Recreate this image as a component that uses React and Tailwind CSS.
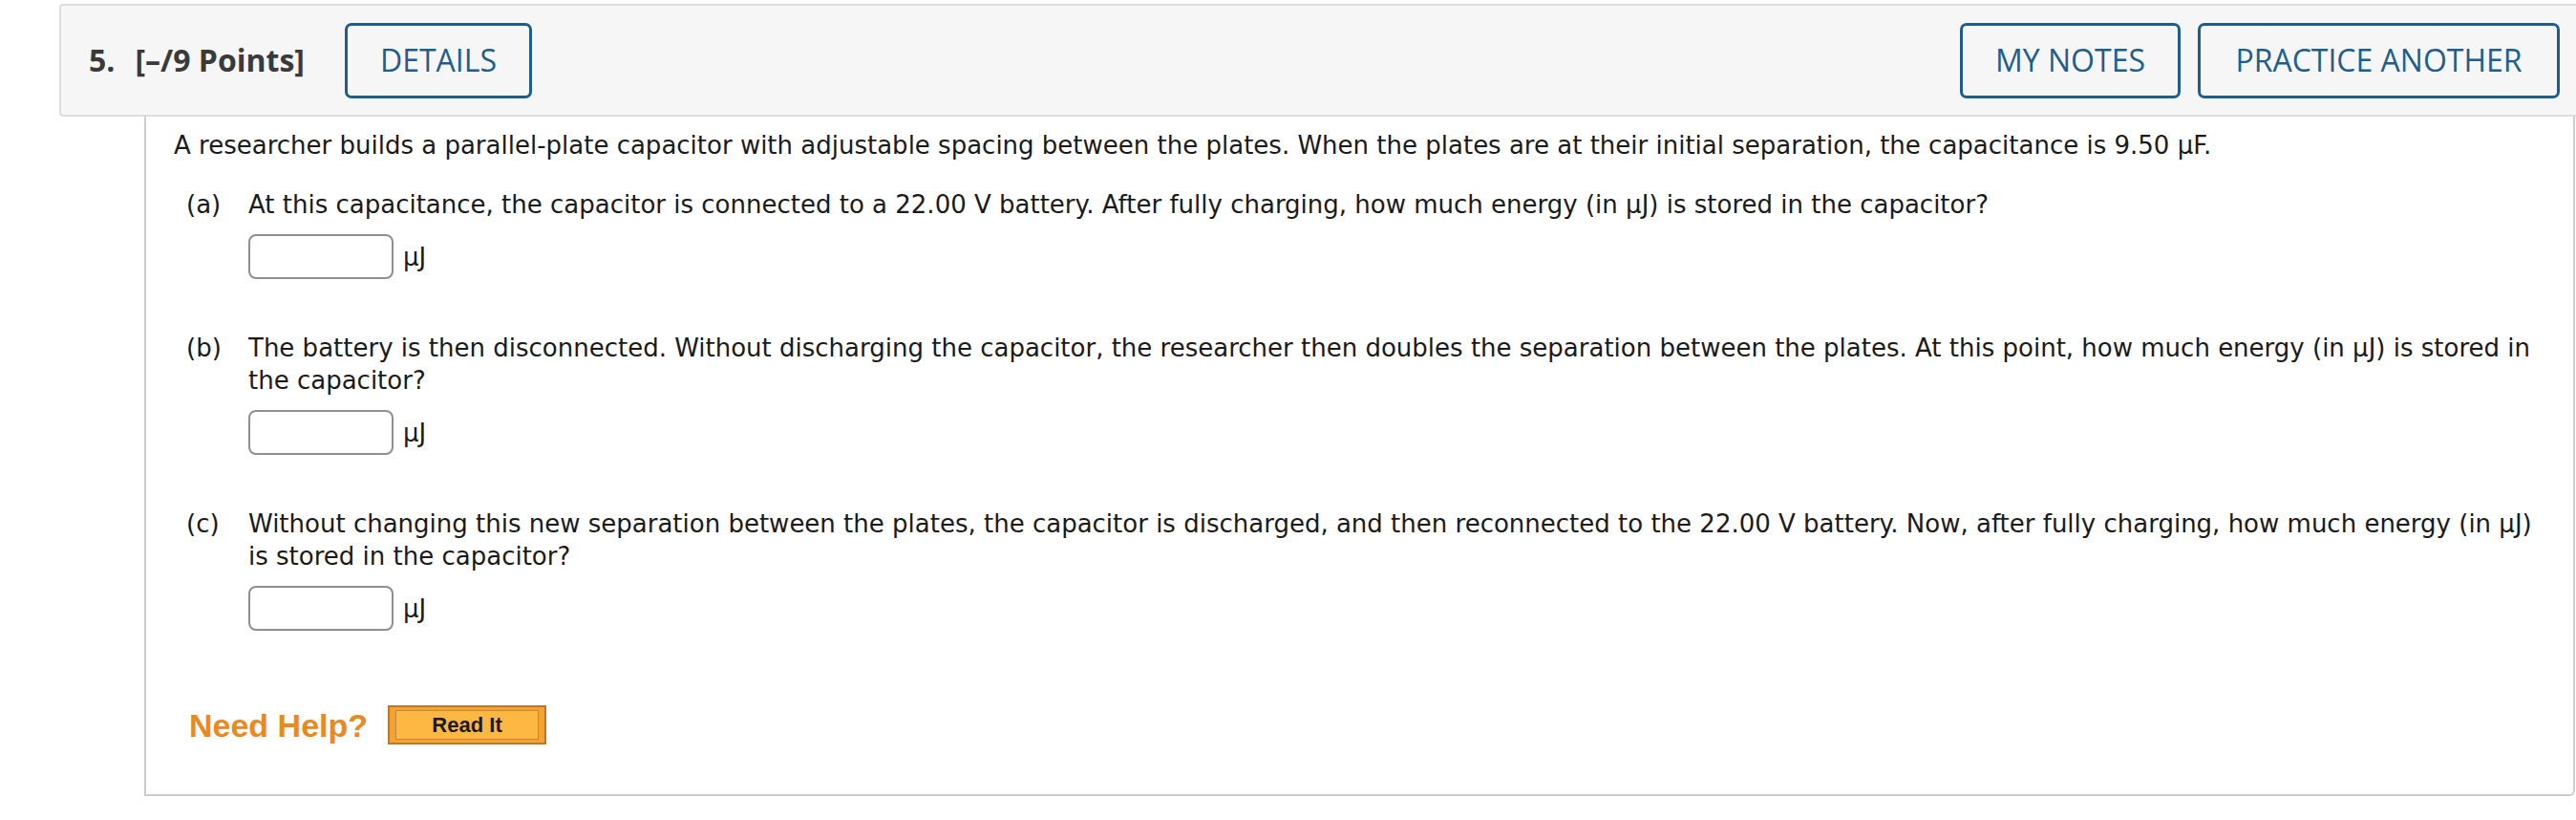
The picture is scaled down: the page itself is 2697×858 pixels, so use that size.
import React from 'react';

const parts = [
  {
    label: '(a)',
    text: 'At this capacitance, the capacitor is connected to a 22.00 V battery. After fully charging, how much energy (in μJ) is stored in the capacitor?',
  },
  {
    label: '(b)',
    text: 'The battery is then disconnected. Without discharging the capacitor, the researcher then doubles the separation between the plates. At this point, how much energy (in μJ) is stored in the capacitor?',
  },
  {
    label: '(c)',
    text: 'Without changing this new separation between the plates, the capacitor is discharged, and then reconnected to the 22.00 V battery. Now, after fully charging, how much energy (in μJ) is stored in the capacitor?',
  },
];

function HeaderButton({ children, width }) {
  return (
    <button
      className={`h-[79px] ${width} rounded-[7px] border-[3px] border-[#1f5e8c] text-[#1f5e8c] text-[32px] font-['Open_Sans',sans-serif] flex items-center justify-center`}
    >
      {children}
    </button>
  );
}

function Part({ label, text, first }) {
  return (
    <div className={`grid grid-cols-[65px_1fr] ${first ? 'mt-[28px]' : 'mt-[55px]'}`}>
      <div>{label}</div>
      <div>
        <p>{text}</p>
        <div className="mt-[14px] flex items-center">
          <input
            type="text"
            className="w-[152px] h-[47px] rounded-[8px] border-2 border-[#8f8f8f] bg-white outline-none"
          />
          <span className="ml-[10px]">μJ</span>
        </div>
      </div>
    </div>
  );
}

export default function App() {
  return (
    <div className="min-h-screen bg-white pt-[4px] pl-[62px]">
      <div className="h-[118px] flex items-center rounded-l-[4px] border-2 border-r-0 border-[#dddddd] bg-[#f6f6f7] pl-[29px] pr-[17px] font-['Open_Sans',sans-serif]">
        <span className="text-[32px] font-bold text-[#3a3a3a]">5.</span>
        <span className="ml-[21px] text-[32px] font-bold text-[#3a3a3a]">[–/9 Points]</span>
        <div className="ml-[42px]">
          <HeaderButton width="w-[196px]">DETAILS</HeaderButton>
        </div>
        <div className="ml-auto flex gap-[18px]">
          <HeaderButton width="w-[231px]">MY NOTES</HeaderButton>
          <HeaderButton width="w-[379px]">PRACTICE ANOTHER</HeaderButton>
        </div>
      </div>

      <div className="ml-[89px] mr-[1px] rounded-br-[6px] border-2 border-t-0 border-[#cccccc] pt-[13px] pl-[29px] pr-[22px] pb-[52px] text-[26px] leading-[34px] text-[#1a1a1a] font-['DejaVu_Sans',Verdana,sans-serif]">
        <p>
          A researcher builds a parallel-plate capacitor with adjustable spacing between the plates. When the plates are at their initial separation, the capacitance is 9.50 μF.
        </p>

        <div className="ml-[13px]">
          {parts.map((p, i) => (
            <Part key={p.label} label={p.label} text={p.text} first={i === 0} />
          ))}
        </div>

        <div className="mt-[78px] ml-[16px] flex items-center">
          <span className="text-[34px] leading-none font-bold text-[#e98a1f] font-['Liberation_Sans',Arial,sans-serif]">
            Need Help?
          </span>
          <button className="ml-[21px] w-[166px] h-[41px] border-2 border-[#b97a2c] bg-[#f4a232] px-[6px] py-[3px]">
            <span className="flex h-full items-center justify-center border border-[#c4883c] bg-[#fdb843] text-[22px] font-bold text-[#1f1a14] font-['Liberation_Sans',Arial,sans-serif]">
              Read It
            </span>
          </button>
        </div>
      </div>
    </div>
  );
}
